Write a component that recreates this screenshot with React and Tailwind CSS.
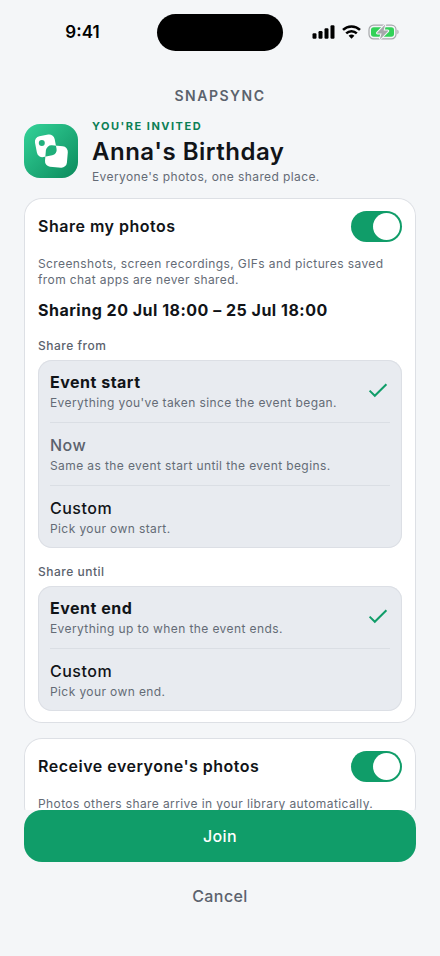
import { useState } from "react";

const fromOptions = [
  { id: "start", title: "Event start", helper: "Everything you've taken since the event began." },
  { id: "now", title: "Now", helper: "Same as the event start until the event begins.", muted: true },
  { id: "custom", title: "Custom", helper: "Pick your own start." },
];

const untilOptions = [
  { id: "end", title: "Event end", helper: "Everything up to when the event ends." },
  { id: "custom", title: "Custom", helper: "Pick your own end." },
];

function StatusBar() {
  return (
    <div className="grid h-16 shrink-0 grid-cols-[1fr_auto_1fr] items-center">
      <span className="pt-0.5 pl-2 text-center text-[17px] font-semibold text-black">9:41</span>
      <div className="h-[37px] w-[126px] rounded-full bg-black" />
      <div className="flex items-center justify-center gap-[7px] pr-3">
        <svg width="23" height="14" viewBox="0 0 23 14" aria-hidden="true">
          <rect x="0.5" y="8.3" width="4" height="5.4" rx="1.2" />
          <rect x="6.5" y="6" width="4" height="7.7" rx="1.2" />
          <rect x="12.5" y="3.2" width="4" height="10.5" rx="1.2" />
          <rect x="18.5" y="0.3" width="4" height="13.4" rx="1.2" />
        </svg>
        <svg width="19" height="14" viewBox="0 0 19 14" aria-hidden="true">
          <g fill="none" stroke="#000" strokeWidth="2.5">
            <path d="M1 4.9a12.2 12.2 0 0 1 17 0" />
            <path d="M4.2 8.3a7.6 7.6 0 0 1 10.6 0" />
          </g>
          <path d="M9.5 13.8 6.6 10.8a4.2 4.2 0 0 1 5.8 0z" />
        </svg>
        <svg width="32" height="16" viewBox="0 0 32 16" aria-hidden="true">
          <rect x="1" y="1.2" width="27" height="13.6" rx="4.6" fill="none" stroke="#a6a8ab" strokeWidth="1.2" />
          <path d="M29.4 5.8c1.6.6 1.6 3.8 0 4.4z" fill="#a6a8ab" />
          <rect x="3" y="3.2" width="23" height="9.6" rx="2.8" fill="#32d158" />
          <path
            d="M17.2.4 9.2 8.7c-.3.4-.1.8.4.8h4L11.8 15.4 20 7.3c.4-.4.2-.9-.4-.9h-4z"
            fill="#a6a8ab"
            stroke="#f4f6f8"
            strokeWidth="2"
            paintOrder="stroke"
          />
        </svg>
      </div>
    </div>
  );
}

function EventIcon() {
  return (
    <svg className="shrink-0" width="54" height="54" viewBox="0 0 54 54" aria-hidden="true">
      <defs>
        <linearGradient id="tile" x1="0" y1="0" x2="1" y2="1">
          <stop offset="0" stopColor="#34d399" />
          <stop offset="1" stopColor="#0b8a5c" />
        </linearGradient>
        <clipPath id="back-photo">
          <rect x="11.8" y="11.2" width="20" height="21.2" rx="5.5" transform="rotate(-11 21.8 21.8)" />
        </clipPath>
      </defs>
      <rect width="54" height="54" rx="16" fill="url(#tile)" />
      <rect x="11.8" y="11.2" width="20" height="21.2" rx="5.5" transform="rotate(-11 21.8 21.8)" fill="#fff" />
      <circle cx="17.8" cy="19" r="3" fill="#22b17e" />
      <rect x="21.4" y="21.8" width="22" height="21.4" rx="5.5" transform="rotate(5 32.4 32.5)" fill="#fff" />
      <g clipPath="url(#back-photo)">
        <rect x="21.4" y="21.8" width="22" height="21.4" rx="5.5" transform="rotate(5 32.4 32.5)" fill="#1faf7a" />
      </g>
    </svg>
  );
}

function ShareCard({ id, title, helper, children }) {
  const [enabled, setEnabled] = useState(true);

  return (
    <section className="rounded-[18px] bg-white px-3.5 py-3 inset-ring inset-ring-[#dde0e5]">
      <div className="flex h-8 items-center justify-between gap-3">
        <label htmlFor={id} className="text-base font-semibold tracking-[0.5px] text-[#111418]">
          {title}
        </label>
        <input
          id={id}
          type="checkbox"
          role="switch"
          checked={enabled}
          onChange={(e) => setEnabled(e.target.checked)}
          className="flex h-[31px] w-[51px] shrink-0 appearance-none items-center rounded-full bg-gray-300 px-0.5 before:size-[27px] before:rounded-full before:bg-white checked:justify-end checked:bg-[#109d69]"
        />
      </div>
      <p className="mt-3.5 text-xs tracking-[0.4px] text-[#646b76]">{helper}</p>
      {children}
    </section>
  );
}

function OptionGroup({ name, legend, options }) {
  const [selected, setSelected] = useState(options[0].id);

  return (
    <fieldset className="mt-4">
      <legend className="text-xs font-medium tracking-[0.5px] text-[#5b626d]">{legend}</legend>
      <div className="mt-1.5 rounded-[14px] bg-[#e8ebf0] px-3 inset-ring inset-ring-[#dcdfe5]">
        {options.map((option) => {
          const active = option.id === selected;
          const weight = active ? "font-bold" : "font-medium";
          const color = option.muted ? "text-[#5b626d]" : "text-[#111418]";
          return (
            <label
              key={option.id}
              className="flex items-center justify-between border-b border-[#dadee4] pt-[11px] pb-[9px] last:border-b-0"
            >
              <input
                type="radio"
                name={name}
                value={option.id}
                checked={active}
                onChange={() => setSelected(option.id)}
                className="sr-only"
              />
              <span>
                <span className={`block text-base/[22px] tracking-[0.5px] ${weight} ${color}`}>{option.title}</span>
                <span className="block text-xs/5 tracking-[0.4px] text-[#646b76]">{option.helper}</span>
              </span>
              {active && (
                <svg className="shrink-0" width="24" height="24" viewBox="0 0 24 24" fill="none" aria-hidden="true">
                  <path d="m3.6 10.6 5.2 5.2L20.4 4.2" stroke="#109d69" strokeWidth="2" />
                </svg>
              )}
            </label>
          );
        })}
      </div>
    </fieldset>
  );
}

export default function App() {
  return (
    <div className="flex h-dvh flex-col bg-[#f4f6f8] font-['Inter',sans-serif]">
      <StatusBar />
      <main className="flex min-h-0 flex-1 flex-col overflow-hidden px-6 pt-5">
        <p className="text-center text-sm/6 font-semibold tracking-[1.5px] text-[#5b626d]">SNAPSYNC</p>
        <header className="mt-2.5 flex gap-3.5">
          <div className="pt-1.5">
            <EventIcon />
          </div>
          <div>
            <p className="text-[11px]/4 font-bold tracking-[1.5px] text-[#0c7f56]">YOU'RE INVITED</p>
            <h1 className="text-2xl/[35px] font-semibold tracking-[0.5px] text-[#111418]">Anna's Birthday</h1>
            <p className="text-xs tracking-[0.4px] text-[#646b76]">Everyone's photos, one shared place.</p>
          </div>
        </header>
        <div className="mt-[13px] flex flex-col gap-[15px]">
          <ShareCard
            id="share"
            title="Share my photos"
            helper="Screenshots, screen recordings, GIFs and pictures saved from chat apps are never shared."
          >
            <p className="mt-2.5 text-base font-bold tracking-[0.5px] text-[#111418]">
              Sharing 20 Jul 18:00 – 25 Jul 18:00
            </p>
            <OptionGroup name="from" legend="Share from" options={fromOptions} />
            <OptionGroup name="until" legend="Share until" options={untilOptions} />
          </ShareCard>
          <ShareCard
            id="receive"
            title="Receive everyone's photos"
            helper="Photos others share arrive in your library automatically."
          />
        </div>
      </main>
      <footer className="flex flex-col gap-2.5 px-6 pb-9">
        <button type="button" className="h-[52px] rounded-[18px] bg-[#109d69] text-base font-medium tracking-wide text-white">
          Join
        </button>
        <button type="button" className="h-12 text-base font-medium tracking-wide text-[#5b626d]">
          Cancel
        </button>
      </footer>
    </div>
  );
}
